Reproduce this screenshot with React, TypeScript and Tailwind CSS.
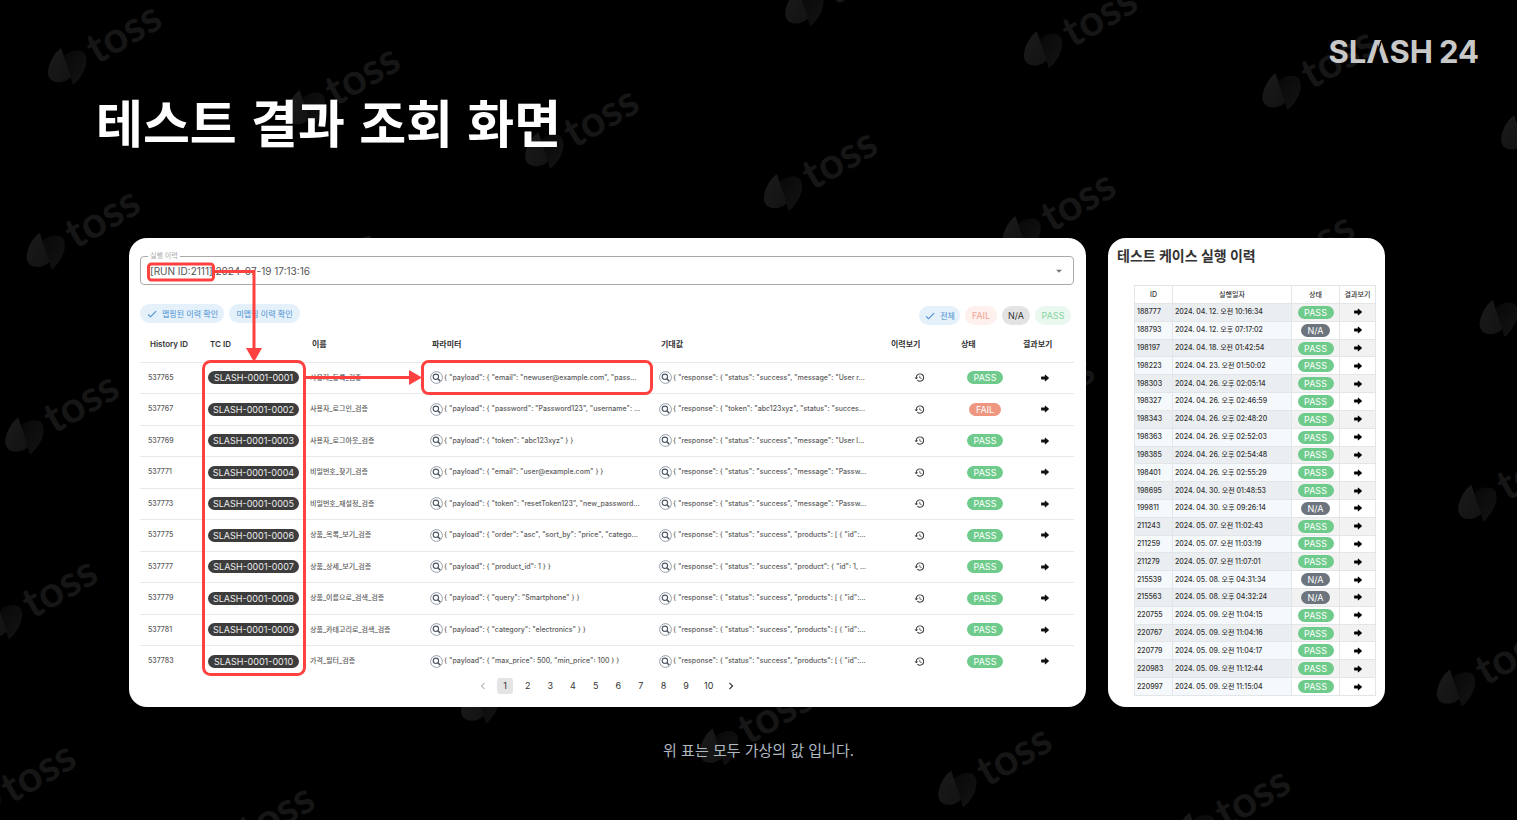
import { MdArrowDropDown, MdCheck, MdChevronLeft, MdChevronRight, MdHistory } from 'react-icons/md';

type Status = 'PASS' | 'FAIL' | 'N/A';

interface TestCase {
  id: number;
  tc: string;
  name: string;
  payload: string;
  response: string;
  status: Status;
}

const testCases: TestCase[] = [
  { id: 537765, tc: 'SLASH-0001-0001', name: '사용자_등록_검증', payload: '{ "payload": { "email": "newuser@example.com", "pass...', response: '{ "response": { "status": "success", "message": "User r...', status: 'PASS' },
  { id: 537767, tc: 'SLASH-0001-0002', name: '사용자_로그인_검증', payload: '{ "payload": { "password": "Password123", "username": ...', response: '{ "response": { "token": "abc123xyz", "status": "succes...', status: 'FAIL' },
  { id: 537769, tc: 'SLASH-0001-0003', name: '사용자_로그아웃_검증', payload: '{ "payload": { "token": "abc123xyz" } }', response: '{ "response": { "status": "success", "message": "User l...', status: 'PASS' },
  { id: 537771, tc: 'SLASH-0001-0004', name: '비밀번호_찾기_검증', payload: '{ "payload": { "email": "user@example.com" } }', response: '{ "response": { "status": "success", "message": "Passw...', status: 'PASS' },
  { id: 537773, tc: 'SLASH-0001-0005', name: '비밀번호_재설정_검증', payload: '{ "payload": { "token": "resetToken123", "new_password...', response: '{ "response": { "status": "success", "message": "Passw...', status: 'PASS' },
  { id: 537775, tc: 'SLASH-0001-0006', name: '상품_목록_보기_검증', payload: '{ "payload": { "order": "asc", "sort_by": "price", "catego...', response: '{ "response": { "status": "success", "products": [ { "id":...', status: 'PASS' },
  { id: 537777, tc: 'SLASH-0001-0007', name: '상품_상세_보기_검증', payload: '{ "payload": { "product_id": 1 } }', response: '{ "response": { "status": "success", "product": { "id": 1, ...', status: 'PASS' },
  { id: 537779, tc: 'SLASH-0001-0008', name: '상품_이름으로_검색_검증', payload: '{ "payload": { "query": "Smartphone" } }', response: '{ "response": { "status": "success", "products": [ { "id":...', status: 'PASS' },
  { id: 537781, tc: 'SLASH-0001-0009', name: '상품_카테고리로_검색_검증', payload: '{ "payload": { "category": "electronics" } }', response: '{ "response": { "status": "success", "products": [ { "id":...', status: 'PASS' },
  { id: 537783, tc: 'SLASH-0001-0010', name: '가격_필터_검증', payload: '{ "payload": { "max_price": 500, "min_price": 100 } }', response: '{ "response": { "status": "success", "products": [ { "id":...', status: 'PASS' },
];

const runs: [number, string, Status][] = [
  [188777, '2024. 04. 12. 오전 10:16:34', 'PASS'],
  [188793, '2024. 04. 12. 오후 07:17:02', 'N/A'],
  [198197, '2024. 04. 18. 오전 01:42:54', 'PASS'],
  [198223, '2024. 04. 23. 오전 01:50:02', 'PASS'],
  [198303, '2024. 04. 26. 오후 02:05:14', 'PASS'],
  [198327, '2024. 04. 26. 오후 02:46:59', 'PASS'],
  [198343, '2024. 04. 26. 오후 02:48:20', 'PASS'],
  [198363, '2024. 04. 26. 오후 02:52:03', 'PASS'],
  [198385, '2024. 04. 26. 오후 02:54:48', 'PASS'],
  [198401, '2024. 04. 26. 오후 02:55:29', 'PASS'],
  [198695, '2024. 04. 30. 오전 01:48:53', 'PASS'],
  [199811, '2024. 04. 30. 오후 09:26:14', 'N/A'],
  [211243, '2024. 05. 07. 오전 11:02:43', 'PASS'],
  [211259, '2024. 05. 07. 오전 11:03:19', 'PASS'],
  [211279, '2024. 05. 07. 오전 11:07:01', 'PASS'],
  [215539, '2024. 05. 08. 오후 04:31:34', 'N/A'],
  [215563, '2024. 05. 08. 오후 04:32:24', 'N/A'],
  [220755, '2024. 05. 09. 오전 11:04:15', 'PASS'],
  [220767, '2024. 05. 09. 오전 11:04:16', 'PASS'],
  [220779, '2024. 05. 09. 오전 11:04:17', 'PASS'],
  [220983, '2024. 05. 09. 오전 11:12:44', 'PASS'],
  [220997, '2024. 05. 09. 오전 11:15:04', 'PASS'],
];

const watermarks = [-1, 0, 1, 2, 3, 4]
  .flatMap((row) =>
    [-1, 0, 1, 2, 3, 4, 5, 6, 7].map((col) => ({
      x: 67 + col * 238.6 - row * 21.4,
      y: 66 + col * 42 + row * 184.8,
    })),
  )
  .filter(({ x, y }) => x > -100 && x < 1540 && y > -20 && y < 860);

function Watermark() {
  return (
    <svg className="pointer-events-none absolute inset-0 h-full w-full" aria-hidden="true">
      <defs>
        <linearGradient id="drop-left" x1="0" y1="0" x2="1" y2="1">
          <stop offset="0" stopColor="#1b1b1b" />
          <stop offset="1" stopColor="#121212" />
        </linearGradient>
        <linearGradient id="drop-right" x1="0" y1="0" x2="1" y2="1">
          <stop offset="0" stopColor="#080808" />
          <stop offset="1" stopColor="#141414" />
        </linearGradient>
      </defs>
      {watermarks.map(({ x, y }) => (
        <g key={`${x}:${y}`} transform={`translate(${x} ${y})`}>
          <path d="M-3 -10C2 -15 10 -17 16 -14C20 -11 20 -4 18 2C16 8 11 15 6 19Z" fill="url(#drop-right)" />
          <path d="M-6 -18C-13 -13 -19 -2 -19 7C-18 15 -12 17 -5 16C-1 15 2 13 4 11Z" fill="url(#drop-left)" />
          <text
            transform="translate(30 -1) rotate(-30)"
            className="fill-[#161616] font-['Lato','Open_Sans',sans-serif] text-[43px] font-bold"
          >
            toss
          </text>
        </g>
      ))}
    </svg>
  );
}

function SlashLogo() {
  return (
    <p className="flex gap-1.5 text-[31px] leading-10 font-bold text-[#c8c8c8]">
      <span>
        SL
        <span className="relative">
          Λ
          <svg viewBox="0 0 22 24" className="absolute top-2 left-0 h-6 w-[22px]" aria-hidden="true">
            <path d="M15.5 -1L10.5 15" stroke="#000" strokeWidth="1.6" />
          </svg>
        </span>
        SH
      </span>
      <span>24</span>
    </p>
  );
}

const badgeColors: Record<Status, string> = {
  PASS: 'w-9 bg-[#6fcb8c]',
  FAIL: 'w-8 bg-[#ee967f]',
  'N/A': 'w-[29px] bg-[#6c757d]',
};

function Badge({ status }: { status: Status }) {
  return (
    <span className={`inline-flex h-[13px] items-center justify-center rounded-full text-[9px] leading-none text-white ${badgeColors[status]}`}>
      {status}
    </span>
  );
}

function ArrowIcon() {
  return (
    <svg viewBox="0 0 8 8" className="h-2 w-2" fill="currentColor" aria-hidden="true">
      <path d="M.4 2.6H3.8V.9Q3.9.4 4.4.7L7.7 3.6Q8 4 7.7 4.4L4.4 7.3Q3.9 7.6 3.8 7.1V5.4H.4Q.1 5.4.1 5.1V2.9Q.1 2.6.4 2.6Z" />
    </svg>
  );
}

function InspectIcon() {
  return (
    <svg viewBox="0 0 13 13" className="h-[13px] w-[13px]" fill="none" aria-hidden="true">
      <circle cx="6.5" cy="6.5" r="5.9" stroke="#8b95a1" strokeWidth=".9" />
      <circle cx="5.9" cy="5.8" r="2.7" stroke="#4e5968" strokeWidth="1.1" />
      <path d="M7.9 7.8L10.2 10.1" stroke="#4e5968" strokeWidth="1.5" />
    </svg>
  );
}

function JsonCell({ text, label }: { text: string; label: string }) {
  return (
    <div className="flex items-center gap-px">
      <button type="button" aria-label={label}>
        <InspectIcon />
      </button>
      <span>{text}</span>
    </div>
  );
}

function Chip({ label, className, checked }: { label: string; className: string; checked?: boolean }) {
  return (
    <button type="button" aria-pressed={!!checked} className={`flex h-[19px] items-center justify-center gap-1 rounded-full ${className}`}>
      {checked && <MdCheck className="h-3 w-3" aria-hidden="true" />}
      {label}
    </button>
  );
}

function Annotations() {
  return (
    <svg className="pointer-events-none absolute inset-0 h-full w-full" fill="none" stroke="#ff4140" strokeWidth="3" aria-hidden="true">
      <rect x="19.5" y="26" width="65" height="16" rx="3" />
      <path d="M85 33.5H125V112" />
      <path d="M117 110H133L125 124Z" fill="#ff4140" stroke="none" />
      <rect x="74.5" y="123.5" width="101" height="313" rx="7" />
      <path d="M176 139.5H282" />
      <path d="M280 132V147L293 139.5Z" fill="#ff4140" stroke="none" />
      <rect x="293.5" y="123.5" width="229" height="32" rx="6" />
    </svg>
  );
}

function ResultsCard() {
  return (
    <section className="relative flex min-w-0 flex-1 flex-col rounded-[18px] bg-white pt-[18px] pr-3 pb-[13px] pl-[11px]">
      <div className="relative">
        <label htmlFor="run" className="absolute -top-[5px] left-2 bg-white px-0.5 text-[7px] leading-[10px] text-[#a8a8a8]">
          실행 이력
        </label>
        <select id="run" className="h-[29px] w-full appearance-none rounded border border-[#aaa] bg-transparent px-[9px] pt-0.5 text-[10px] text-[#555]">
          <option>[RUN ID:2111] 2024-07-19 17:13:16</option>
        </select>
        <MdArrowDropDown className="pointer-events-none absolute top-2 right-2 h-[14px] w-[14px] text-[#777]" aria-hidden="true" />
      </div>

      <div className="mt-[17px] flex items-center justify-between pr-[3px]">
        <div className="flex gap-[5px] text-[8px] text-[#4a90d2]">
          <Chip label="맵핑된 이력 확인" checked className="w-[84px] bg-[#e4f0fa]" />
          <Chip label="미맵핑 이력 확인" className="w-[71px] bg-[#e4f0fa]" />
        </div>
        <div className="mt-1 flex gap-[5px] text-[9px]">
          <Chip label="전체" checked className="w-[41px] bg-[#e4f0fa] text-[8px] text-[#4a90d2]" />
          <Chip label="FAIL" className="w-8 bg-[#fdf0ed] text-[#f3a696]" />
          <Chip label="N/A" className="w-7 bg-[#e3e3e3] text-[#333]" />
          <Chip label="PASS" className="w-9 bg-[#ebf8ef] text-[#86d5a0]" />
        </div>
      </div>

      <table className="mt-0.5 h-[349px] w-full table-fixed text-left text-[7px] font-medium whitespace-nowrap text-[#5c5c5c]">
        <colgroup>
          <col className="w-[68px]" />
          <col className="w-[102px]" />
          <col className="w-[120px]" />
          <col className="w-[229px]" />
          <col />
          <col className="w-[70px]" />
          <col className="w-[62px]" />
          <col className="w-[58px]" />
        </colgroup>
        <thead>
          <tr className="h-[35px] text-[8px] text-[#333]">
            <th className="pl-[10px] font-semibold">History ID</th>
            <th className="pl-0.5 font-semibold">TC ID</th>
            <th className="pl-0.5 font-semibold">이름</th>
            <th className="pl-0.5 font-semibold">파라미터</th>
            <th className="pl-0.5 font-semibold">기대값</th>
            <th className="pl-[7px] font-semibold">이력보기</th>
            <th className="pl-[7px] font-semibold">상태</th>
            <th className="pl-[7px] font-semibold">결과보기</th>
          </tr>
        </thead>
        <tbody>
          {testCases.map((row) => (
            <tr key={row.id} className="border-t border-[#e9e9e9]">
              <td className="pl-2">{row.id}</td>
              <td>
                <span className="flex h-[13px] w-[91px] items-center justify-center rounded-full bg-[#3d3d3d] text-[9px] leading-none font-normal text-[#ececec]">{row.tc}</span>
              </td>
              <td>{row.name}</td>
              <td>
                <JsonCell text={row.payload} label="파라미터 보기" />
              </td>
              <td>
                <JsonCell text={row.response} label="기대값 보기" />
              </td>
              <td>
                <button type="button" aria-label="이력보기" className="mx-auto block text-[#333]">
                  <MdHistory className="h-[11px] w-[11px]" />
                </button>
              </td>
              <td className="font-normal">
                <div className="flex justify-center">
                  <Badge status={row.status} />
                </div>
              </td>
              <td>
                <button type="button" aria-label="결과보기" className="mx-auto block text-[#111]">
                  <ArrowIcon />
                </button>
              </td>
            </tr>
          ))}
        </tbody>
      </table>

      <nav aria-label="페이지" className="mx-auto mt-0.5 flex w-[265px] items-center justify-between text-[9px] text-[#333]">
        <button type="button" aria-label="이전" className="flex h-4 w-4 items-center justify-center text-[#bbb]">
          <MdChevronLeft className="h-[14px] w-[14px]" />
        </button>
        {[1, 2, 3, 4, 5, 6, 7, 8, 9, 10].map((page) => (
          <button key={page} type="button" className={`flex h-4 w-4 items-center justify-center rounded-[3px] ${page === 1 ? 'bg-[#e4e4e4]' : ''}`}>
            {page}
          </button>
        ))}
        <button type="button" aria-label="다음" className="flex h-4 w-4 items-center justify-center">
          <MdChevronRight className="h-[14px] w-[14px]" />
        </button>
      </nav>

      <Annotations />
    </section>
  );
}

function HistoryCard() {
  return (
    <section className="w-[277px] shrink-0 rounded-[18px] bg-white px-[9px] pt-2 pb-[11px]">
      <h2 className="text-[14px] leading-5 font-bold text-[#333]">테스트 케이스 실행 이력</h2>
      <div className="mt-[19px] pl-[17px]">
        <table className="h-[411px] w-full table-fixed text-left text-[7px] leading-[10px] font-medium whitespace-nowrap text-[#333]">
          <colgroup>
            <col className="w-[38px]" />
            <col />
            <col className="w-12" />
            <col className="w-9" />
          </colgroup>
          <thead>
            <tr className="h-[18px] text-center">
              <th className="border border-[#e2e6e9] font-medium">ID</th>
              <th className="border border-[#e2e6e9] font-medium">실행일자</th>
              <th className="border border-[#e2e6e9] font-medium">상태</th>
              <th className="border border-[#e2e6e9] font-medium">결과보기</th>
            </tr>
          </thead>
          <tbody>
            {runs.map(([id, date, status]) => (
              <tr key={id} className="group odd:bg-[#f2f2f2]">
                <td className="border border-[#e2e6e9] bg-[#f5f9fc] pl-0.5 group-odd:bg-[#eaeef1]">{id}</td>
                <td className="border border-[#e2e6e9] bg-[#f5f9fc] pl-0.5 group-odd:bg-[#eaeef1]">{date}</td>
                <td className="border border-[#e2e6e9] font-normal">
                  <div className="flex justify-center">
                    <Badge status={status} />
                  </div>
                </td>
                <td className="border border-[#e2e6e9]">
                  <button type="button" aria-label="결과보기" className="mx-auto block text-black">
                    <ArrowIcon />
                  </button>
                </td>
              </tr>
            ))}
          </tbody>
        </table>
      </div>
    </section>
  );
}

export default function App() {
  return (
    <div lang="ko" className="relative min-h-screen overflow-hidden bg-black font-['Inter','Noto_Sans_CJK_KR',sans-serif]">
      <Watermark />
      <main className="relative">
        <header className="flex justify-end pt-8 pr-[38px]">
          <SlashLogo />
        </header>
        <h1 className="mt-[9px] pl-24 font-['Noto_Sans_CJK_KR',sans-serif] text-[51px] leading-[80px] font-bold text-white">
          테스트 결과 조회 화면
        </h1>
        <div className="mt-[77px] flex items-stretch gap-[22px] pr-[132px] pl-[129px]">
          <ResultsCard />
          <HistoryCard />
        </div>
        <p className="mt-8 text-center font-['Noto_Sans_CJK_KR',sans-serif] text-[15px] leading-[22px] text-[#b0b8c1]">
          위 표는 모두 가상의 값 입니다.
        </p>
      </main>
    </div>
  );
}
